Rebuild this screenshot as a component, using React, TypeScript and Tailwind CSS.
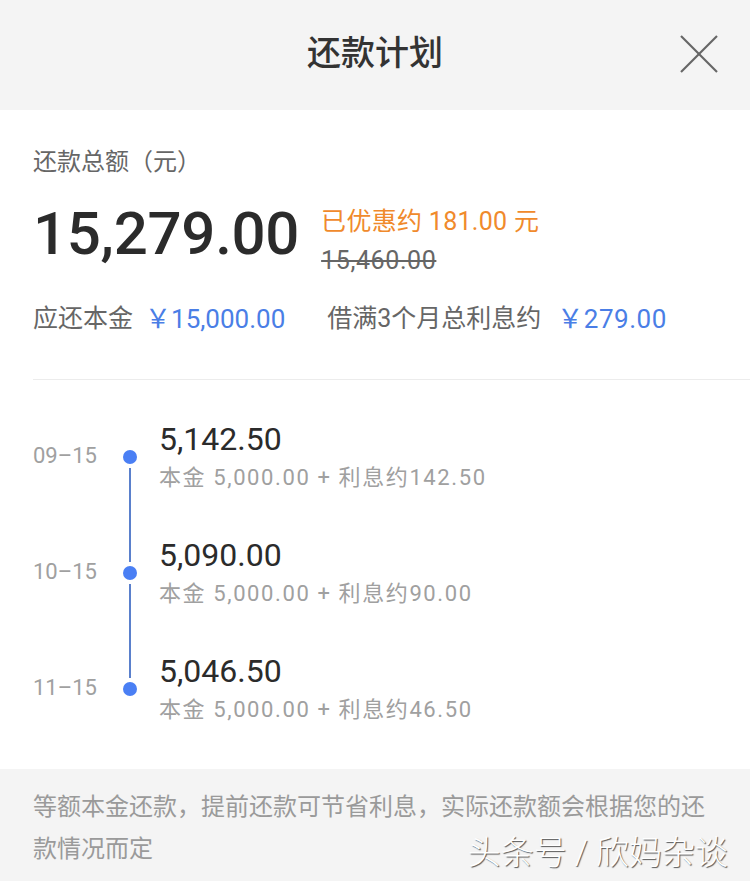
const rows = [
  { date: "09–15", amount: "5,142.50", interest: "142.50" },
  { date: "10–15", amount: "5,090.00", interest: "90.00" },
  { date: "11–15", amount: "5,046.50", interest: "46.50" },
];

function CloseIcon() {
  return (
    <svg width="38" height="38" viewBox="0 0 38 38" fill="none" stroke="#666" strokeWidth="2.2">
      <line x1="1" y1="1" x2="37" y2="37" />
      <line x1="37" y1="1" x2="1" y2="37" />
    </svg>
  );
}

export default function App() {
  return (
    <div className="relative flex h-[881px] w-[750px] flex-col overflow-hidden bg-white font-['Roboto','Noto_Sans_CJK_SC',sans-serif]">
      {/* header */}
      <div className="relative flex h-[110px] shrink-0 items-center justify-center bg-[#f4f4f4]">
        <span className="pb-[4px] text-[34px] font-medium leading-none text-[#333]">还款计划</span>
        <button className="absolute right-[32px] top-[35px]">
          <CloseIcon />
        </button>
      </div>

      {/* summary */}
      <div className="shrink-0 pl-[33px] pt-[36px]">
        <div className="text-[24px] leading-[32px] text-[#666]">还款总额（元）</div>
        <div className="mt-[20px] flex items-start">
          <span className="text-[60px] font-medium leading-[72px] tracking-[-0.3px] text-[#2b2b2b]">15,279.00</span>
          <div className="ml-[22px] mt-[8px] flex flex-col">
            <span className="text-[25px] leading-[32px] tracking-[0.3px] text-[#f08a2c]">已优惠约 181.00 元</span>
            <span className="mt-[7px] text-[25px] leading-[32px] tracking-[0.6px] text-[#666] line-through decoration-[#666]">15,460.00</span>
          </div>
        </div>
        <div className="mt-[26px] flex items-center leading-[32px]">
          <span className="text-[25px] text-[#666]">应还本金</span>
          <span className="ml-[12px] text-[26px] text-[#4a7ee6]">￥15,000.00</span>
          <span className="ml-[42px] text-[25px] text-[#666]">借满3个月总利息约</span>
          <span className="ml-[16px] text-[26px] tracking-[0.5px] text-[#4a7ee6]">￥279.00</span>
        </div>
        <div className="mt-[44px] h-px bg-[#ececec]" />
      </div>

      {/* timeline */}
      <div className="flex flex-1 flex-col pl-[33px] pt-[41px]">
        {rows.map((r, i) => (
          <div key={r.date} className="flex h-[116px] shrink-0 items-start">
            <span className="mt-[20px] w-[90px] text-[22px] leading-[30px] text-[#a0a0a0]">{r.date}</span>
            <div className="relative flex h-full w-[14px] flex-col items-center">
              <div className="mt-[29px] h-[14px] w-[14px] rounded-full bg-[#4a7ff4]" />
              {i < rows.length - 1 && (
                <div className="absolute left-[6px] top-[47px] h-[94px] w-[2px] bg-[#5a80cc]" />
              )}
            </div>
            <div className="ml-[22px] flex flex-col">
              <span className="text-[32px] leading-[36px] text-[#2b2b2b]">{r.amount}</span>
              <span className="mt-[6px] text-[22px] leading-[30px] tracking-[1.6px] text-[#a0a0a0]">
                本金 5,000.00 + 利息约{r.interest}
              </span>
            </div>
          </div>
        ))}
      </div>

      {/* footer note */}
      <div className="relative h-[113px] shrink-0 bg-[#f4f4f4] px-[33px] pt-[17px]">
        <p className="text-[24px] leading-[42px] text-[#9a9a9a]">
          等额本金还款，提前还款可节省利息，实际还款额会根据您的还款情况而定
        </p>
        <span className="absolute bottom-[13px] right-[22px] text-[33px] font-light leading-none text-white [text-shadow:1px_1px_1px_#555]">
          头条号 / 欣妈杂谈
        </span>
      </div>
    </div>
  );
}
